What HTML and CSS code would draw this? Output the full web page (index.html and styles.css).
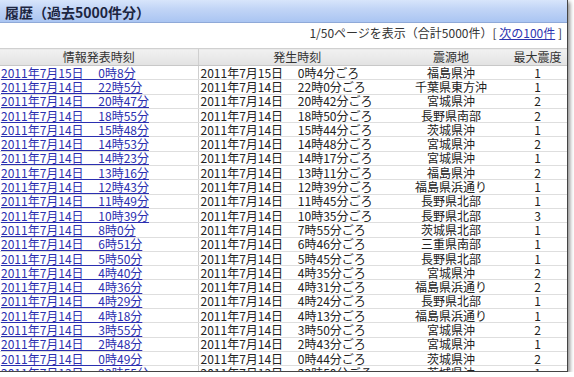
FILE: index.html
```html
<!DOCTYPE html>
<html lang="ja">
<head>
<meta charset="utf-8">
<title>履歴</title>
<link rel="stylesheet" href="styles.css">
</head>
<body>
<div class="frame">
  <div class="titlebar">履歴（過去5000件分）</div>
  <div class="pager">1/50ページを表示（合計5000件）[ <a href="#" class="next">次の100件</a> ]</div>
  <table class="list">
    <colgroup><col class="c1"><col class="c2"><col class="c3"><col class="c4"></colgroup>
    <thead>
      <tr><th>情報発表時刻</th><th class="sep">発生時刻</th><th>震源地</th><th>最大震度</th></tr>
    </thead>
    <tbody>
      <tr><td><a href="#">2011年7月15日 0時8分</a></td><td class="sep">2011年7月15日 0時4分ごろ</td><td class="ctr">福島県沖</td><td class="ctr">1</td></tr>
      <tr><td><a href="#">2011年7月14日 22時5分</a></td><td class="sep">2011年7月14日 22時0分ごろ</td><td class="ctr">千葉県東方沖</td><td class="ctr">1</td></tr>
      <tr><td><a href="#">2011年7月14日 20時47分</a></td><td class="sep">2011年7月14日 20時42分ごろ</td><td class="ctr">宮城県沖</td><td class="ctr">2</td></tr>
      <tr><td><a href="#">2011年7月14日 18時55分</a></td><td class="sep">2011年7月14日 18時50分ごろ</td><td class="ctr">長野県南部</td><td class="ctr">2</td></tr>
      <tr><td><a href="#">2011年7月14日 15時48分</a></td><td class="sep">2011年7月14日 15時44分ごろ</td><td class="ctr">茨城県沖</td><td class="ctr">1</td></tr>
      <tr><td><a href="#">2011年7月14日 14時53分</a></td><td class="sep">2011年7月14日 14時48分ごろ</td><td class="ctr">宮城県沖</td><td class="ctr">2</td></tr>
      <tr><td><a href="#">2011年7月14日 14時23分</a></td><td class="sep">2011年7月14日 14時17分ごろ</td><td class="ctr">宮城県沖</td><td class="ctr">1</td></tr>
      <tr><td><a href="#">2011年7月14日 13時16分</a></td><td class="sep">2011年7月14日 13時11分ごろ</td><td class="ctr">福島県沖</td><td class="ctr">2</td></tr>
      <tr><td><a href="#">2011年7月14日 12時43分</a></td><td class="sep">2011年7月14日 12時39分ごろ</td><td class="ctr">福島県浜通り</td><td class="ctr">1</td></tr>
      <tr><td><a href="#">2011年7月14日 11時49分</a></td><td class="sep">2011年7月14日 11時45分ごろ</td><td class="ctr">長野県北部</td><td class="ctr">1</td></tr>
      <tr><td><a href="#">2011年7月14日 10時39分</a></td><td class="sep">2011年7月14日 10時35分ごろ</td><td class="ctr">長野県北部</td><td class="ctr">3</td></tr>
      <tr><td><a href="#">2011年7月14日 8時0分</a></td><td class="sep">2011年7月14日 7時55分ごろ</td><td class="ctr">茨城県北部</td><td class="ctr">1</td></tr>
      <tr><td><a href="#">2011年7月14日 6時51分</a></td><td class="sep">2011年7月14日 6時46分ごろ</td><td class="ctr">三重県南部</td><td class="ctr">1</td></tr>
      <tr><td><a href="#">2011年7月14日 5時50分</a></td><td class="sep">2011年7月14日 5時45分ごろ</td><td class="ctr">長野県北部</td><td class="ctr">1</td></tr>
      <tr><td><a href="#">2011年7月14日 4時40分</a></td><td class="sep">2011年7月14日 4時35分ごろ</td><td class="ctr">宮城県沖</td><td class="ctr">2</td></tr>
      <tr><td><a href="#">2011年7月14日 4時36分</a></td><td class="sep">2011年7月14日 4時31分ごろ</td><td class="ctr">福島県浜通り</td><td class="ctr">2</td></tr>
      <tr><td><a href="#">2011年7月14日 4時29分</a></td><td class="sep">2011年7月14日 4時24分ごろ</td><td class="ctr">長野県北部</td><td class="ctr">1</td></tr>
      <tr><td><a href="#">2011年7月14日 4時18分</a></td><td class="sep">2011年7月14日 4時13分ごろ</td><td class="ctr">福島県浜通り</td><td class="ctr">1</td></tr>
      <tr><td><a href="#">2011年7月14日 3時55分</a></td><td class="sep">2011年7月14日 3時50分ごろ</td><td class="ctr">宮城県沖</td><td class="ctr">2</td></tr>
      <tr><td><a href="#">2011年7月14日 2時48分</a></td><td class="sep">2011年7月14日 2時43分ごろ</td><td class="ctr">宮城県沖</td><td class="ctr">1</td></tr>
      <tr><td><a href="#">2011年7月14日 0時49分</a></td><td class="sep">2011年7月14日 0時44分ごろ</td><td class="ctr">茨城県沖</td><td class="ctr">2</td></tr>
      <tr><td><a href="#">2011年7月13日 23時55分</a></td><td class="sep">2011年7月13日 23時50分ごろ</td><td class="ctr">茨城県沖</td><td class="ctr">1</td></tr>
    </tbody>
  </table>
</div>
</body>
</html>
```
FILE: styles.css
```css
html, body {
  margin: 0;
  padding: 0;
  background: #fff;
}

body {
  font-family: "Noto Sans CJK JP", "Noto Sans", sans-serif;
  font-size: 12px;
  color: #222;
}

.frame {
  width: 567px;
  height: 371px;
  overflow: hidden;
  border-right: 1px solid #444;
  border-bottom: 1px solid #444;
  box-shadow: 2px 2px 4px rgba(0, 0, 0, 0.45);
  background: #fff;
}

.titlebar {
  height: 22px;
  border-bottom: 1px solid #8fa9d8;
  background: linear-gradient(#d8e5fb, #c2d5f6 40%, #aac5f2);
  color: #1c2540;
  font-weight: bold;
  font-size: 14px;
  line-height: 24px;
  padding-left: 5px;
}

.pager {
  height: 25px;
  box-sizing: border-box;
  padding: 2px 5px 0 0;
  line-height: 15px;
  text-align: right;
  color: #333;
}

.pager .next {
  color: #2b34b0;
}

.list {
  width: 567px;
  border-collapse: collapse;
  table-layout: fixed;
}

.list .c1 { width: 198px; }
.list .c2 { width: 196px; }
.list .c3 { width: 114px; }
.list .c4 { width: 59px; }

.list thead tr {
  height: 17px;
}

.list th {
  padding: 0;
  font-weight: normal;
  color: #333;
  line-height: 14px;
  background: linear-gradient(#f1f1f1, #e2e2e2);
  border-top: 1px solid #d0d0d0;
  border-bottom: 1px solid #c8c8c8;
  text-align: center;
  white-space: nowrap;
}

.list tbody tr {
  height: 14.3px;
}

.list td {
  padding: 0;
  line-height: 12px;
  border-bottom: 1px solid #dedede;
  white-space: nowrap;
  word-spacing: 12px;
}

.list td:first-child {
  padding-left: 1px;
}

.list .sep {
  border-left: 1px solid #cfcfcf;
  padding-left: 2px;
}

.list .ctr {
  text-align: center;
  word-spacing: 0;
}

.list a {
  color: #2b2fb0;
  text-decoration: underline;
}
```
